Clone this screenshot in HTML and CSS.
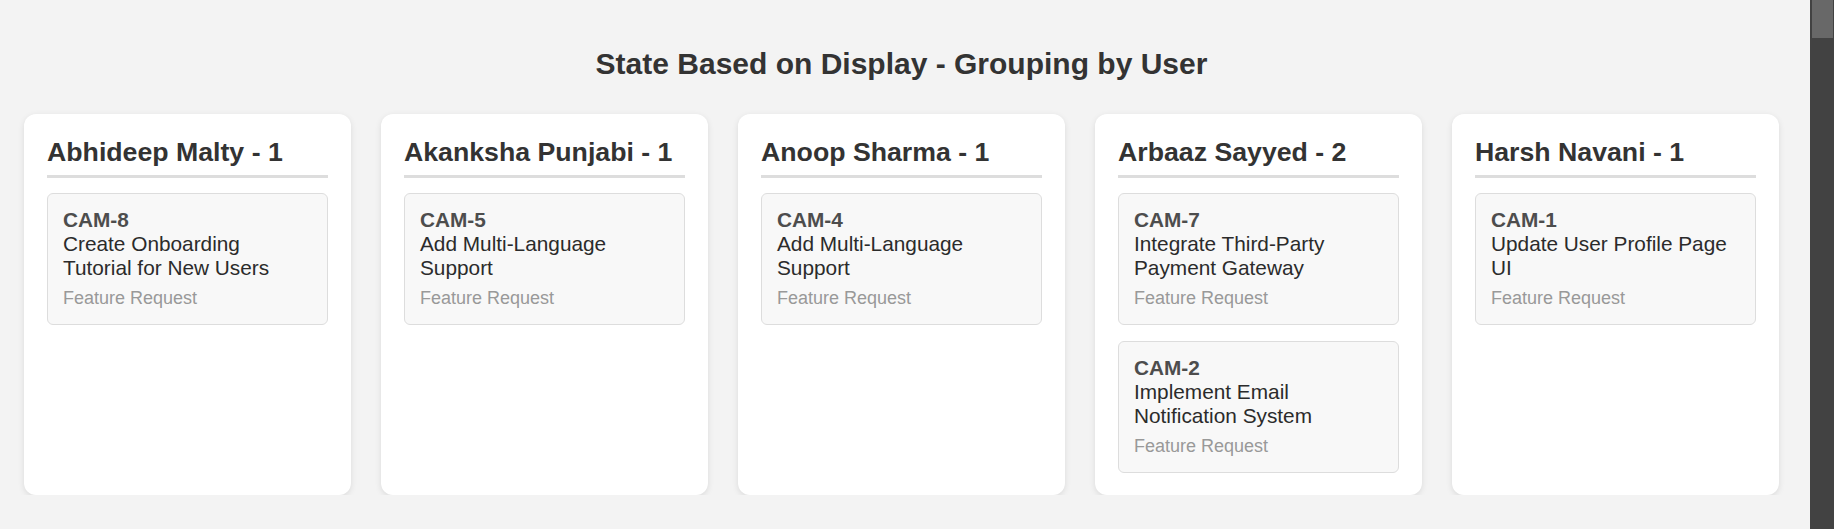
FILE: index.html
```html
<!DOCTYPE html>
<html lang="en">
<head>
<meta charset="utf-8">
<title>State Based on Display - Grouping by User</title>
<link rel="stylesheet" href="styles.css">
</head>
<body>
<div class="page">
  <h1 class="page-title">State Based on Display - Grouping by User</h1>
  <div class="board">
    <section class="column">
      <h2 class="column-title">Abhideep Malty - 1</h2>
      <div class="task">
        <div class="task-id">CAM-8</div>
        <div class="task-name">Create Onboarding Tutorial for New Users</div>
        <div class="task-type">Feature Request</div>
      </div>
    </section>
    <section class="column">
      <h2 class="column-title">Akanksha Punjabi - 1</h2>
      <div class="task">
        <div class="task-id">CAM-5</div>
        <div class="task-name">Add Multi-Language Support</div>
        <div class="task-type">Feature Request</div>
      </div>
    </section>
    <section class="column">
      <h2 class="column-title">Anoop Sharma - 1</h2>
      <div class="task">
        <div class="task-id">CAM-4</div>
        <div class="task-name">Add Multi-Language Support</div>
        <div class="task-type">Feature Request</div>
      </div>
    </section>
    <section class="column">
      <h2 class="column-title">Arbaaz Sayyed - 2</h2>
      <div class="task">
        <div class="task-id">CAM-7</div>
        <div class="task-name">Integrate Third-Party Payment Gateway</div>
        <div class="task-type">Feature Request</div>
      </div>
      <div class="task">
        <div class="task-id">CAM-2</div>
        <div class="task-name">Implement Email Notification System</div>
        <div class="task-type">Feature Request</div>
      </div>
    </section>
    <section class="column">
      <h2 class="column-title">Harsh Navani - 1</h2>
      <div class="task">
        <div class="task-id">CAM-1</div>
        <div class="task-name">Update User Profile Page UI</div>
        <div class="task-type">Feature Request</div>
      </div>
    </section>
  </div>
</div>
<div class="scrollbar"><div class="scrollbar-thumb"></div></div>
</body>
</html>
```
FILE: styles.css
```css
html, body {
  margin: 0;
  padding: 0;
  background: #f3f3f3;
  overflow: hidden;
}

body {
  font-family: "Liberation Sans", Arial, sans-serif;
  color: #333;
}

.page {
  margin-right: 24px;
  padding-top: 47px;
}

.page-title {
  margin: 0 0 33px;
  font-size: 30px;
  font-weight: bold;
  text-align: center;
  color: #333;
  padding-right: 7px;
}

.board {
  display: flex;
  align-items: stretch;
  gap: 30px;
  padding: 0 31px 0 24px;
}

.column {
  flex: 1 1 0;
  min-width: 0;
  background: #fff;
  border-radius: 12px;
  box-shadow: 0 2px 6px rgba(0, 0, 0, 0.1);
  padding: 23px 23px 22px;
  display: flex;
  flex-direction: column;
  gap: 16px;
}

.column-title {
  margin: 0 0 -1px;
  font-size: 26.7px;
  font-weight: bold;
  color: #333;
  padding-bottom: 7px;
  border-bottom: 3px solid #ddd;
}

.task {
  background: #f8f8f8;
  border: 1px solid #ddd;
  border-radius: 6px;
  padding: 14px 15px 15px;
}

.task-id {
  font-size: 20.8px;
  font-weight: bold;
  color: #4d4d4d;
}

.task-name {
  font-size: 20.8px;
  color: #2b2b2b;
}

.task-type {
  margin-top: 8px;
  font-size: 18px;
  color: #999;
}

.scrollbar {
  position: fixed;
  top: 0;
  right: 0;
  width: 24px;
  height: 100%;
  background: #424242;
}

.scrollbar-thumb {
  margin-left: 2px;
  width: 21px;
  height: 38px;
  background: #686868;
}
```
